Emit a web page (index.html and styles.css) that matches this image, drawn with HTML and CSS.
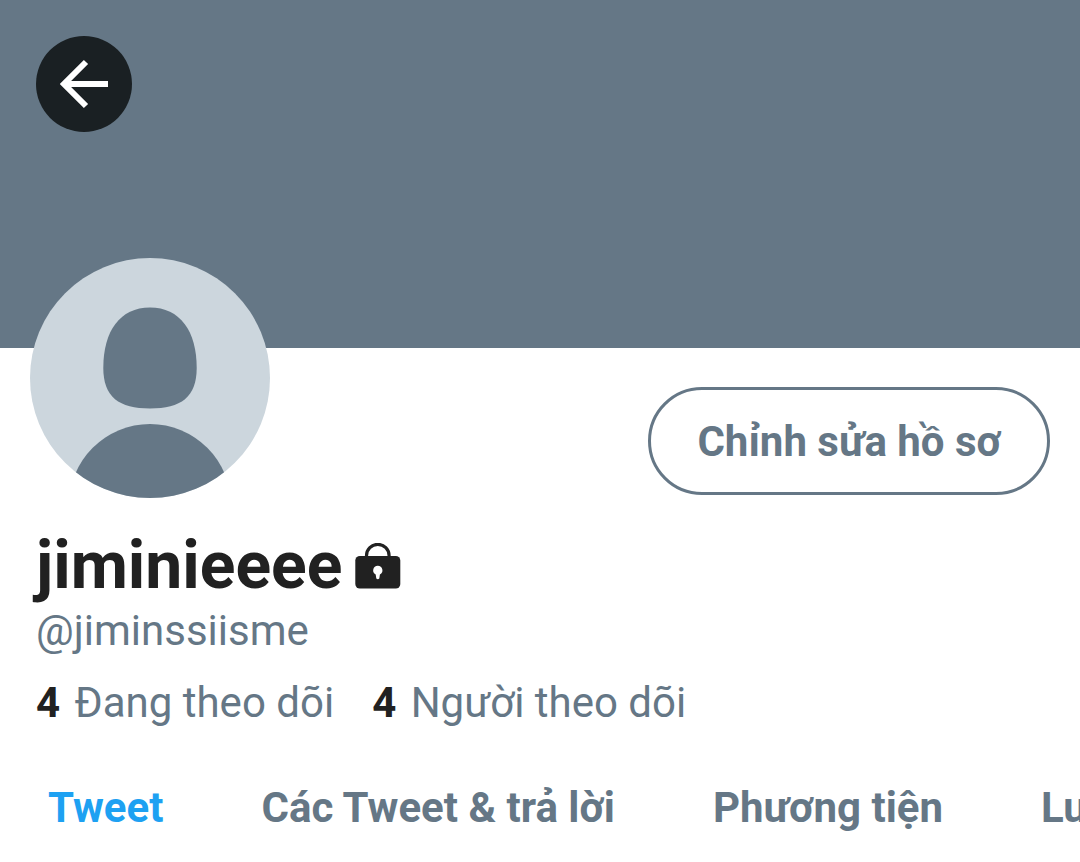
FILE: index.html
```html
<!DOCTYPE html>
<html lang="vi">
  <head>
    <meta charset="UTF-8" />
    <meta name="viewport" content="width=device-width, initial-scale=1.0" />
    <title>jiminieeee (@jiminssiisme)</title>
    <link rel="stylesheet" href="styles.css">
  </head>
  <body>
    <header class="banner">
      <button class="back-btn" type="button" aria-label="Quay lại">
        <svg viewBox="0 0 96 96" aria-hidden="true">
          <path d="M72 48H28M50 26L28 48L50 70" fill="none" stroke="#fff" stroke-width="6" />
        </svg>
      </button>
    </header>

    <main class="profile">
      <div class="profile-top">
        <svg class="avatar" viewBox="0 0 240 240" aria-hidden="true">
          <defs>
            <clipPath id="avatarClip"><circle cx="120" cy="120" r="120" /></clipPath>
          </defs>
          <g clip-path="url(#avatarClip)">
            <rect width="240" height="240" fill="#ccd6dd" />
            <path d="M120 49.500C150 49.500 166.700 73 166.700 110C166.700 139 151 150.500 120 150.500C89 150.500 73.300 139 73.300 110C73.300 73 90 49.500 120 49.500Z" fill="#657786" />
            <circle cx="120" cy="247" r="81" fill="#657786" />
          </g>
        </svg>
        <button class="edit-btn" type="button">Chỉnh sửa hồ sơ</button>
      </div>

      <h1 class="name">
        jiminieeee
        <svg class="lock" viewBox="0 0 46 46" aria-hidden="true">
          <path d="M11.500 16V12.700A11.300 11.300 0 0 1 34.100 12.700V16" fill="none" stroke="#212121" stroke-width="3.200" />
          <rect x="0.300" y="13" width="45" height="32.500" rx="4.500" fill="#212121" />
          <path d="M22.800 22.800A4.600 4.600 0 0 0 20.700 31.500L21.300 35.500Q22.800 37 24.300 35.500L24.900 31.500A4.600 4.600 0 0 0 22.800 22.800Z" fill="#fff" />
        </svg>
      </h1>
      <p class="handle">@jiminssiisme</p>

      <div class="stats">
        <a href="#following"><strong>4</strong> Đang theo dõi</a>
        <a href="#followers"><strong>4</strong> Người theo dõi</a>
      </div>
    </main>

    <nav class="tabs">
      <a class="active" href="#tweets">Tweet</a>
      <a href="#replies">Các Tweet &amp; trả lời</a>
      <a href="#media">Phương tiện</a>
      <a href="#likes">Lượt thích</a>
    </nav>
  </body>
</html>
```

FILE: styles.css
```css
* {
  box-sizing: border-box;
}
body {
  margin: 0;
  background: #fff;
  color: #657786;
  font-family: Roboto, sans-serif;
  font-size: 42px;
  line-height: 48px;
  overflow-x: hidden;
}
a {
  color: inherit;
  text-decoration: none;
}
button {
  font: inherit;
  cursor: pointer;
}
.banner {
  height: 348px;
  padding: 36px;
  background: #657786;
}
.back-btn {
  display: block;
  width: 96px;
  height: 96px;
  padding: 0;
  border: none;
  border-radius: 50%;
  background: #1a2023;
}
.back-btn svg {
  display: block;
}
.profile {
  padding: 0 30px 0 36px;
}
.profile-top {
  display: flex;
  justify-content: space-between;
  align-items: flex-end;
  margin: -90px 0 0 -6px;
}
.avatar {
  width: 240px;
  height: 240px;
}
.edit-btn {
  height: 108px;
  margin-bottom: 3px;
  padding: 2px 46px 0;
  border: 3px solid #657786;
  border-radius: 54px;
  background: #fff;
  color: #657786;
  font-weight: bold;
}
.name {
  display: flex;
  align-items: center;
  gap: 13px;
  margin: 29px 0 0;
  color: #212121;
  font-size: 66px;
  line-height: 78px;
}
.lock {
  width: 46px;
  height: 46px;
}
.handle {
  margin: 2px 0 0;
}
.stats {
  display: flex;
  gap: 38px;
  margin-top: 24px;
}
.stats strong {
  margin-right: 4px;
  color: #212121;
}
.tabs {
  display: flex;
  gap: 98px;
  margin-top: 57px;
  padding: 0 48px;
  overflow: hidden;
  font-weight: bold;
  white-space: nowrap;
}
.tabs .active {
  color: #1da1f2;
}
```
